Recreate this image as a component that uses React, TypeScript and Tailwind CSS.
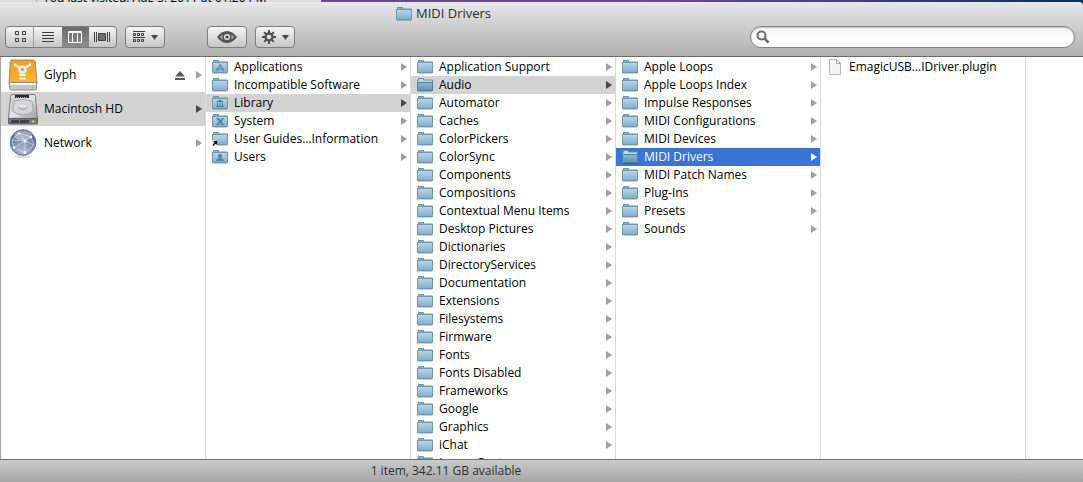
import { useState } from 'react';

type Glyph = 'apps' | 'library' | 'system' | 'alias' | 'users' | 'file';
type Entry = { name: string; glyph?: Glyph };

const ROOT: Entry[] = [
  { name: 'Applications', glyph: 'apps' },
  { name: 'Incompatible Software' },
  { name: 'Library', glyph: 'library' },
  { name: 'System', glyph: 'system' },
  { name: 'User Guides…Information', glyph: 'alias' },
  { name: 'Users', glyph: 'users' },
];

const LIBRARY: Entry[] = [
  'Application Support',
  'Audio',
  'Automator',
  'Caches',
  'ColorPickers',
  'ColorSync',
  'Components',
  'Compositions',
  'Contextual Menu Items',
  'Desktop Pictures',
  'Dictionaries',
  'DirectoryServices',
  'Documentation',
  'Extensions',
  'Filesystems',
  'Firmware',
  'Fonts',
  'Fonts Disabled',
  'Frameworks',
  'Google',
  'Graphics',
  'iChat',
  'Image Capture',
].map((name) => ({ name }));

const AUDIO: Entry[] = [
  'Apple Loops',
  'Apple Loops Index',
  'Impulse Responses',
  'MIDI Configurations',
  'MIDI Devices',
  'MIDI Drivers',
  'MIDI Patch Names',
  'Plug-Ins',
  'Presets',
  'Sounds',
].map((name) => ({ name }));

const DRIVERS: Entry[] = [{ name: 'EmagicUSB…IDriver.plugin', glyph: 'file' }];

export default function App() {
  const [query, setQuery] = useState('');

  return (
    <div className="flex h-screen flex-col overflow-hidden bg-[#a8a8a8] font-['Open_Sans',sans-serif] text-xs text-black">
      <Backdrop />
      <header className="relative shrink-0 rounded-tr border-b border-[#6a6a6a] bg-linear-to-b from-[#e8e8e8] to-[#b0b0b0]">
        <h1 className="flex h-6 items-center justify-center gap-1 pr-[196px] text-[13px] text-[#2b2b2b]">
          <FolderIcon />
          MIDI Drivers
        </h1>
        <div className="flex h-[30px] items-start pr-2 pl-[5px]">
          <div className="flex h-[22px] w-28 overflow-hidden rounded border border-[#7d7d7d] bg-linear-to-b from-[#f6f6f6] to-[#c6c6c6]">
            <button
              aria-label="Icon view"
              className="flex flex-1 items-center justify-center border-r border-[#9a9a9a]"
            >
              <svg width="12" height="12" fill="none" stroke="#3b3b3b">
                <path d="M1.5 .5h3v3h-3zM8.500 .5h3v3h-3zM1.5 7.500h3v3h-3zM8.500 7.500h3v3h-3z" />
              </svg>
            </button>
            <button
              aria-label="List view"
              className="flex flex-1 items-center justify-center"
            >
              <svg width="12" height="12" stroke="#3b3b3b">
                <path d="M0 1.5h12M0 4.500h12M0 7.500h12M0 10.500h12" />
              </svg>
            </button>
            <button
              aria-label="Column view"
              aria-pressed="true"
              className="flex flex-1 items-center justify-center bg-linear-to-b from-[#6b6b6b] to-[#8e8e8e]"
            >
              <svg width="14" height="12" fill="none" stroke="#fff">
                <path d="M.5 .5h13v11H.5zM4.500 .5v11M9.500 .5v11M0 1.500h14" />
              </svg>
            </button>
            <button
              aria-label="Cover flow"
              className="flex flex-1 items-center justify-center"
            >
              <svg width="16" height="12" fill="none" stroke="#444">
                <path d="M.5 1v10M2.500 1v10M13.500 1v10M15.500 1v10" />
                <path d="M4.500 2.500h7v7h-7z" fill="#6e6e6e" />
              </svg>
            </button>
          </div>
          <ToolButton label="Arrange" className="ml-2">
            <svg width="12" height="12" fill="none" stroke="#3b3b3b">
              <path d="M0 .5h12M0 6.500h12" />
              <path d="M.5 2.500h2v2h-2zM4.500 2.500h2v2h-2zM8.500 2.500h2v2h-2zM.5 8.500h2v2h-2zM4.500 8.500h2v2h-2zM8.500 8.500h2v2h-2z" />
            </svg>
            <DownArrow />
          </ToolButton>
          <ToolButton label="Quick Look" className="ml-[42px]">
            <svg width="20" height="14" viewBox="0 0 20 14">
              <path
                d="M0 7C3 3 6.500 1 10 1s7 2 10 6c-3 4-6.500 6-10 6S3 11 0 7z"
                fill="#555"
              />
              <path
                d="M3 7c1-1.200 2-2 3-2.500a5 5 0 0 0 0 5C5 9 4 8.200 3 7zM17 7c-1-1.200-2-2-3-2.500a5 5 0 0 1 0 5c1-.5 2-1.300 3-2.500z"
                fill="#b5b5b5"
              />
              <circle cx="10" cy="7" r="3" fill="#e6e6e6" />
              <circle cx="10" cy="7" r="1.600" fill="#444" />
            </svg>
          </ToolButton>
          <ToolButton label="Action" className="ml-2">
            <GearGlyph />
            <DownArrow />
          </ToolButton>
          <label className="ml-auto flex h-[22px] w-[325px] items-center gap-1 rounded-full border border-[#868686] bg-linear-to-b from-[#f2f2f2] to-white to-60% px-[5px] shadow-[inset_0_1px_1px_#c4c4c4]">
            <svg width="14" height="14" fill="none" stroke="#6a6a6a">
              <circle cx="5.500" cy="5.500" r="4" strokeWidth="2" />
              <path d="M8.500 8.500l4 4" strokeWidth="2.500" />
            </svg>
            <input
              type="search"
              aria-label="Search"
              value={query}
              onChange={(e) => setQuery(e.target.value)}
              className="min-w-0 flex-1 bg-transparent outline-none"
            />
          </label>
        </div>
      </header>

      <main className="flex min-h-0 flex-1 overflow-hidden border-l border-[#a5a5a5] bg-white">
        <ul className="w-[205px] shrink-0 border-r border-[#d9d9d9] pt-px">
          <Volume name="Glyph" icon={<FireWireDrive />} ejectable />
          <Volume name="Macintosh HD" icon={<HardDrive />} selected />
          <Volume name="Network" icon={<NetworkGlobe />} />
        </ul>
        <Column entries={ROOT} selected="Library" />
        <Column entries={LIBRARY} selected="Audio" />
        <Column entries={AUDIO} selected="MIDI Drivers" active />
        <Column entries={DRIVERS} />
      </main>

      <footer className="flex h-[23px] shrink-0 items-center justify-center border-t border-[#6f6f6f] bg-linear-to-b from-[#cbcbcb] to-[#a6a6a6] pr-[191px] text-[#2f2f2f]">
        1 item, 342.11 GB available
      </footer>
    </div>
  );
}

// Sliver of the windows lying behind the Finder
function Backdrop() {
  return (
    <div className="-mb-[2px] flex h-1 shrink-0 bg-linear-to-r from-[#5b4a8c] via-[#6a4d92] via-60% to-[#0e2c5c]">
      <div className="flex w-[321px] items-end gap-[6px] overflow-hidden bg-[#dcdcdc] leading-none whitespace-nowrap">
        <div className="h-full w-[37px] border-r border-[#a8a8a8]" />
        You last visited: Aug 5, 2011 at 01:20 PM
      </div>
    </div>
  );
}

function Column({
  entries,
  selected,
  active,
}: {
  entries: Entry[];
  selected?: string;
  active?: boolean;
}) {
  return (
    <ul className="w-[205px] shrink-0 border-r border-[#d9d9d9] pt-px">
      {entries.map(({ name, glyph }) => {
        const isSelected = name === selected;
        const tone = !isSelected
          ? ''
          : active
            ? 'bg-[#3875d7] text-white'
            : 'bg-[#d3d3d3]';
        return (
          <li key={name}>
            <button
              className={`flex h-[18px] w-full items-center gap-[6px] pr-[3px] pl-[6px] text-left ${tone}`}
            >
              {glyph === 'file' ? (
                <FileIcon />
              ) : (
                <FolderIcon glyph={glyph} open={isSelected && glyph === undefined} />
              )}
              <span className="flex-1 whitespace-nowrap">{name}</span>
              {glyph !== 'file' && (
                <RowArrow
                  fill={isSelected ? (active ? '#fff' : '#4a4a4a') : '#a0a0a0'}
                />
              )}
            </button>
          </li>
        );
      })}
    </ul>
  );
}

function Volume({
  name,
  icon,
  selected,
  ejectable,
}: {
  name: string;
  icon: React.ReactNode;
  selected?: boolean;
  ejectable?: boolean;
}) {
  return (
    <li
      className={`flex h-[34px] items-center pr-[3px] pl-[7px] ${selected ? 'bg-[#d3d3d3]' : ''}`}
    >
      <button className="flex flex-1 items-center gap-[6px] text-left">
        {icon}
        {name}
      </button>
      {ejectable && (
        <button aria-label="Eject" className="mr-[11px]">
          <svg width="10" height="9" fill="#5c5c5c">
            <path d="M5 0l5 5.500H0zM0 7h10v2H0z" />
          </svg>
        </button>
      )}
      <RowArrow fill={selected ? '#4a4a4a' : '#a0a0a0'} />
    </li>
  );
}

function ToolButton({
  label,
  className,
  children,
}: {
  label: string;
  className: string;
  children: React.ReactNode;
}) {
  return (
    <button
      aria-label={label}
      className={`flex h-[22px] w-10 shrink-0 items-center justify-center gap-[6px] rounded border border-[#7d7d7d] bg-linear-to-b from-[#f6f6f6] to-[#c6c6c6] ${className}`}
    >
      {children}
    </button>
  );
}

function DownArrow() {
  return (
    <svg width="7" height="5" fill="#4a4a4a">
      <path d="M0 0h7L3.500 5z" />
    </svg>
  );
}

function RowArrow({ fill }: { fill: string }) {
  return (
    <svg width="6" height="8" fill={fill} className="shrink-0">
      <path d="M0 0l6 4L0 8z" />
    </svg>
  );
}

function GearGlyph() {
  return (
    <svg width="14" height="14" viewBox="-7 -7 14 14" fill="none" stroke="#505050">
      <circle r="3.500" strokeWidth="2.400" />
      <path
        d="M0-7v3M0 7V4M-7 0h3M7 0H4M-4.900-4.900l2 2M4.900-4.900l-2 2M-4.900 4.900l2-2M4.900 4.900l-2-2"
        strokeWidth="2"
      />
    </svg>
  );
}

function FolderIcon({ glyph, open }: { glyph?: Glyph; open?: boolean }) {
  return (
    <svg width="16" height="16" viewBox="0 0 16 16" className="shrink-0">
      <defs>
        <linearGradient id="folder" x2="0" y2="1">
          <stop stopColor="#bdd7e8" />
          <stop offset="1" stopColor="#82adca" />
        </linearGradient>
        <linearGradient id="folderOpen" x2="0" y2="1">
          <stop stopColor="#8fb8d2" />
          <stop offset="1" stopColor="#5f93b8" />
        </linearGradient>
      </defs>
      <path d="M1 14.500h14" stroke="#000" strokeOpacity=".2" />
      <path
        d="M.5 13.500V3.500h1v-2h5v1.500h9v10.500z"
        fill={open ? '#c3d9e6' : '#8fb5cd'}
        stroke="#6390ac"
      />
      <path
        d={open ? 'M.5 5.500h15v8H.5z' : 'M.5 3.500h15v10H.5z'}
        fill={open ? 'url(#folderOpen)' : 'url(#folder)'}
        stroke={open ? '#4d7f9f' : '#6c98b3'}
      />
      {glyph === 'apps' && (
        <path
          d="M5 12l3.500-7M8 5l3.500 7M4 10h8.500"
          fill="none"
          stroke="#5586a6"
          strokeWidth="1.200"
        />
      )}
      {glyph === 'library' && (
        <path
          d="M4 7l4-2.500L12 7zM5 7.500h1V11H5zM7.500 7.500h1V11h-1zM10 7.500h1V11h-1zM4 11h8v1H4z"
          fill="#4c7d9d"
        />
      )}
      {glyph === 'system' && (
        <path
          d="M4 5h3l1.500 2L10 5h2.500L9.600 8.500l3 3.500h-3L8 10l-1.600 2H4l2.900-3.500z"
          fill="#5586a6"
        />
      )}
      {glyph === 'users' && (
        <path
          d="M8 5a2 2 0 0 1 1 3.800c.2.700 3 .9 3 3.200H4c0-2.300 2.800-2.500 3-3.200A2 2 0 0 1 8 5z"
          fill="#5586a6"
        />
      )}
      {glyph === 'alias' && (
        <>
          <path d="M0 9h5v6H0z" fill="#fff" />
          <path
            d="M1 14.500l3-3.500M1.500 10.500H4.500V13.500"
            fill="none"
            stroke="#000"
            strokeWidth="1.300"
          />
        </>
      )}
    </svg>
  );
}

function FileIcon() {
  return (
    <svg width="16" height="16" viewBox="0 0 16 16" className="shrink-0">
      <path d="M2.500 .5h7l4 4v11h-11z" fill="#f5f5f5" stroke="#b5b5b5" />
      <path d="M9.500 .5v4h4z" fill="#fff" stroke="#a8a8a8" />
    </svg>
  );
}

function FireWireDrive() {
  return (
    <svg width="30" height="32" viewBox="0 0 30 32" className="shrink-0">
      <defs>
        <linearGradient id="fw" x2="0" y2="1">
          <stop stopColor="#eda030" />
          <stop offset="1" stopColor="#fbb42c" />
        </linearGradient>
      </defs>
      <path
        d="M3.500 1h22q1.500 0 1.700 1.500L29 25H1L2.300 2.500Q2.400 1 3.500 1z"
        fill="url(#fw)"
        stroke="#b9853c"
      />
      <path
        d="M1.500 23.500h27v6q0 1.500-1.500 1.500H3q-1.500 0-1.500-1.500z"
        fill="#c6c6c4"
        stroke="#8d8d8d"
      />
      <path d="M2 25h26" stroke="#f4f4f4" strokeWidth="2" />
      <circle cx="24.500" cy="28.500" r="1" fill="#a4c421" />
      <g fill="none" stroke="#fff">
        <circle cx="14.500" cy="10.500" r="3" strokeWidth="2.200" />
        <path
          d="M10.500 8L6 5M18.500 8L23 5"
          strokeWidth="2.600"
          strokeDasharray="2.200 .8"
        />
        <path d="M11.500 16h6M11.500 19.500h6" strokeWidth="2" />
      </g>
    </svg>
  );
}

function HardDrive() {
  return (
    <svg width="30" height="32" viewBox="0 0 30 32" className="shrink-0">
      <defs>
        <linearGradient id="hd" x2="1" y2="1">
          <stop stopColor="#c9c9cc" />
          <stop offset=".5" stopColor="#e4e4e7" />
          <stop offset="1" stopColor="#9c9ca1" />
        </linearGradient>
      </defs>
      <path
        d="M4 1.500h22q1 0 1.300 1.500l2.200 22.500H.5L2.700 3Q3 1.500 4 1.500z"
        fill="url(#hd)"
        stroke="#7d7d80"
      />
      <path d="M7 2h14v3H7z" fill="#2a2a2e" />
      <path d="M8 4.500h12" stroke="#aaa" strokeDasharray="1 1" />
      <path
        d="M6 8q9-3 18 0l1.500 10q-10.500 8-21 0z"
        fill="#d6d6da"
        stroke="#a3a3a8"
      />
      <path d="M10.500 14q4.500 5 9 0" fill="none" stroke="#8d8d92" />
      <path d="M11 13.500q4-1.500 8 0" fill="none" stroke="#fff" />
      <circle cx="4" cy="4" r="1" fill="#eee" />
      <circle cx="26" cy="4" r="1" fill="#eee" />
      <path
        d="M.5 25.500h29V30q0 1-1 1h-27q-1 0-1-1z"
        fill="#77777d"
        stroke="#5d5d62"
      />
      <path d="M3 27h8v3H3zM12 27h9v3h-9z" fill="#3e4350" />
      <circle cx="25" cy="28.500" r="1.200" fill="#e0cf3c" />
    </svg>
  );
}

function NetworkGlobe() {
  return (
    <svg width="30" height="32" viewBox="0 0 30 32" className="shrink-0">
      <defs>
        <radialGradient id="globe" cx=".5" cy=".85" r=".85">
          <stop stopColor="#b4bdd2" />
          <stop offset=".6" stopColor="#7c88a8" />
          <stop offset="1" stopColor="#4b577a" />
        </radialGradient>
      </defs>
      <ellipse cx="15" cy="29.500" rx="9" ry="1.500" fill="#000" fillOpacity=".15" />
      <circle cx="15" cy="15.500" r="12.800" fill="url(#globe)" stroke="#66718f" />
      <ellipse cx="15" cy="8.500" rx="9" ry="5" fill="#fff" fillOpacity=".4" />
      <path
        d="M4 13l7-7 12 4 3 8-9 8-11-5zM11 6l6 8 6-4M17 14L4 13M17 14l9 4M17 14l-11 7M17 14v12"
        fill="none"
        stroke="#fff"
        strokeOpacity=".45"
      />
      <g fill="#fff">
        <circle cx="17" cy="14" r="1.500" />
        <circle cx="11" cy="6.500" r="1.200" />
        <circle cx="6" cy="20.500" r="1.300" />
        <circle cx="17" cy="25.500" r="1.300" />
        <circle cx="23" cy="10" r="1.200" />
      </g>
    </svg>
  );
}
